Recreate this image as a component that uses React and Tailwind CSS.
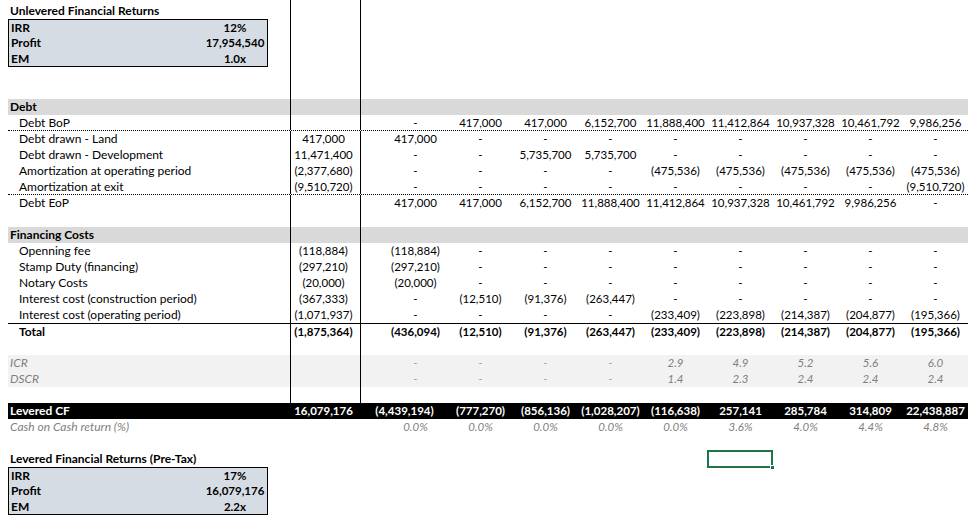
import React from 'react';

const D = '-';

const debtRows = [
  { label: 'Debt BoP', total: '', vals: [D, '417,000', '417,000', '6,152,700', '11,888,400', '11,412,864', '10,937,328', '10,461,792', '9,986,256'], dotted: true },
  { label: 'Debt drawn - Land', total: '417,000', vals: ['417,000', D, D, D, D, D, D, D, D] },
  { label: 'Debt drawn - Development', total: '11,471,400', vals: [D, D, '5,735,700', '5,735,700', D, D, D, D, D] },
  { label: 'Amortization at operating period', total: '(2,377,680)', vals: [D, D, D, D, '(475,536)', '(475,536)', '(475,536)', '(475,536)', '(475,536)'] },
  { label: 'Amortization at exit', total: '(9,510,720)', vals: [D, D, D, D, D, D, D, D, '(9,510,720)'], dotted: true },
  { label: 'Debt EoP', total: '', vals: ['417,000', '417,000', '6,152,700', '11,888,400', '11,412,864', '10,937,328', '10,461,792', '9,986,256', D] },
];

const finRows = [
  { label: 'Openning fee', total: '(118,884)', vals: ['(118,884)', D, D, D, D, D, D, D, D] },
  { label: 'Stamp Duty (financing)', total: '(297,210)', vals: ['(297,210)', D, D, D, D, D, D, D, D] },
  { label: 'Notary Costs', total: '(20,000)', vals: ['(20,000)', D, D, D, D, D, D, D, D] },
  { label: 'Interest cost (construction period)', total: '(367,333)', vals: [D, '(12,510)', '(91,376)', '(263,447)', D, D, D, D, D] },
  { label: 'Interest cost (operating period)', total: '(1,071,937)', vals: [D, D, D, D, '(233,409)', '(223,898)', '(214,387)', '(204,877)', '(195,366)'] },
];

const finTotal = ['(436,094)', '(12,510)', '(91,376)', '(263,447)', '(233,409)', '(223,898)', '(214,387)', '(204,877)', '(195,366)'];
const icr = [D, D, D, D, '2.9', '4.9', '5.2', '5.6', '6.0'];
const dscr = [D, D, D, D, '1.4', '2.3', '2.4', '2.4', '2.4'];
const leveredCF = ['(4,439,194)', '(777,270)', '(856,136)', '(1,028,207)', '(116,638)', '257,141', '285,784', '314,809', '22,438,887'];
const coc = ['0.0%', '0.0%', '0.0%', '0.0%', '0.0%', '3.6%', '4.0%', '4.4%', '4.8%'];

const Periods = ({ vals = [], first = 'pl-[22px]', dashClass = '' }) => (
  <>
    <div className={`w-[87px] flex items-center justify-center whitespace-nowrap text-[11.5px] ${first}`}>
      <span className={vals[0] === D ? dashClass : ''}>{vals[0]}</span>
    </div>
    {[1, 2, 3, 4, 5, 6, 7, 8].map((i) => (
      <div key={i} className="w-[65px] flex items-center justify-center whitespace-nowrap text-[11.5px]">
        <span className={vals[i] === D ? dashClass : ''}>{vals[i]}</span>
      </div>
    ))}
  </>
);

const TotalCol = ({ children, lines = true }) => (
  <div className={`w-[71px] flex items-center justify-center pr-[4px] whitespace-nowrap text-[11.5px] ${lines ? 'border-x border-black' : ''}`}>
    {children}
  </div>
);

const BoxRow = ({ label, value, top, bottom }) => (
  <div className="flex h-4">
    <div className="w-[282px] flex">
      <div className={`w-[260px] flex bg-[#d6dce4] border-x border-black font-bold ${top ? 'border-t' : ''} ${bottom ? 'border-b' : ''}`}>
        <div className="flex-1 pl-[2px] flex items-center">{label}</div>
        <div className="w-[64px] flex items-center justify-center text-[11.5px]">{value}</div>
      </div>
    </div>
    <TotalCol />
  </div>
);

const Blank = () => (
  <div className="flex h-4">
    <div className="w-[282px]" />
    <TotalCol />
  </div>
);

export default function App() {
  return (
    <div className="w-[973px] h-[525px] bg-white overflow-hidden font-[Lato,sans-serif] text-[12px] leading-none text-black pl-[8px]">
      <div className="w-[960px]">
        {/* top sliver of the previous row */}
        <div className="flex h-[3px]">
          <div className="w-[282px]" />
          <TotalCol />
        </div>

        <div className="flex h-4">
          <div className="w-[282px] flex items-center pl-[2px] font-bold">Unlevered Financial Returns</div>
          <TotalCol />
        </div>
        <BoxRow label="IRR" value="12%" top />
        <BoxRow label="Profit" value="17,954,540" />
        <BoxRow label="EM" value="1.0x" bottom />
        <Blank />
        <Blank />

        {/* Debt */}
        <div className="flex h-4 bg-[#d9d9d9] font-bold">
          <div className="w-[282px] flex items-center pl-[2px]">Debt</div>
          <TotalCol />
        </div>
        {debtRows.map((r) => (
          <div key={r.label} className={`flex h-4 ${r.dotted ? 'border-b border-dotted border-black' : ''}`}>
            <div className="w-[282px] flex items-center pl-[11px]">{r.label}</div>
            <TotalCol>{r.total}</TotalCol>
            <Periods vals={r.vals} />
          </div>
        ))}
        <Blank />

        {/* Financing costs */}
        <div className="flex h-4 bg-[#d9d9d9] font-bold">
          <div className="w-[282px] flex items-center pl-[2px]">Financing Costs</div>
          <TotalCol />
        </div>
        {finRows.map((r) => (
          <div key={r.label} className="flex h-4">
            <div className="w-[282px] flex items-center pl-[11px]">{r.label}</div>
            <TotalCol>{r.total}</TotalCol>
            <Periods vals={r.vals} />
          </div>
        ))}
        <div className="flex h-4 border-t border-black font-bold">
          <div className="w-[282px] flex items-center pl-[11px]">Total</div>
          <TotalCol>(1,875,364)</TotalCol>
          <Periods vals={finTotal} />
        </div>
        <Blank />

        {/* Ratios */}
        <div className="bg-[#f2f2f2] italic text-[#7f7f7f]">
          <div className="flex h-4">
            <div className="w-[282px] flex items-center pl-[2px]">ICR</div>
            <TotalCol />
            <Periods vals={icr} dashClass="text-[#a6a6a6] not-italic" />
          </div>
          <div className="flex h-4">
            <div className="w-[282px] flex items-center pl-[2px]">DSCR</div>
            <TotalCol />
            <Periods vals={dscr} dashClass="text-[#a6a6a6] not-italic" />
          </div>
        </div>
        <Blank />

        {/* Levered CF */}
        <div className="flex h-4 bg-black text-white font-bold">
          <div className="w-[282px] flex items-center pl-[2px]">Levered CF</div>
          <TotalCol lines={false}>16,079,176</TotalCol>
          <Periods vals={leveredCF} first="" />
        </div>
        <div className="flex h-4 italic text-[#7f7f7f]">
          <div className="w-[282px] flex items-center pl-[2px]">Cash on Cash return (%)</div>
          <TotalCol lines={false} />
          <Periods vals={coc} />
        </div>
        <div className="h-4" />

        {/* Levered returns */}
        <div className="flex h-4">
          <div className="w-[282px] flex items-center pl-[2px] font-bold whitespace-nowrap">Levered Financial Returns (Pre-Tax)</div>
          <div className="w-[71px]" />
          <div className="w-[87px]" />
          <div className="w-[65px]" />
          <div className="w-[65px]" />
          <div className="w-[65px]" />
          <div className="w-[65px]" />
          <div className="w-[66px] h-[18px] -mt-[1px] -ml-[1px] border-2 border-[#217346] relative">
            <div className="absolute -right-[4px] -bottom-[4px] w-[5px] h-[5px] bg-[#217346] border border-white" />
          </div>
        </div>
        <div className="flex h-4">
          <div className="w-[260px] flex bg-[#d6dce4] border-x border-t border-black font-bold">
            <div className="flex-1 pl-[2px] flex items-center">IRR</div>
            <div className="w-[64px] flex items-center justify-center text-[11.5px]">17%</div>
          </div>
        </div>
        <div className="flex h-4">
          <div className="w-[260px] flex bg-[#d6dce4] border-x border-black font-bold">
            <div className="flex-1 pl-[2px] flex items-center">Profit</div>
            <div className="w-[64px] flex items-center justify-center text-[11.5px]">16,079,176</div>
          </div>
        </div>
        <div className="flex h-4">
          <div className="w-[260px] flex bg-[#d6dce4] border-x border-b border-black font-bold">
            <div className="flex-1 pl-[2px] flex items-center">EM</div>
            <div className="w-[64px] flex items-center justify-center text-[11.5px]">2.2x</div>
          </div>
        </div>
      </div>
    </div>
  );
}
